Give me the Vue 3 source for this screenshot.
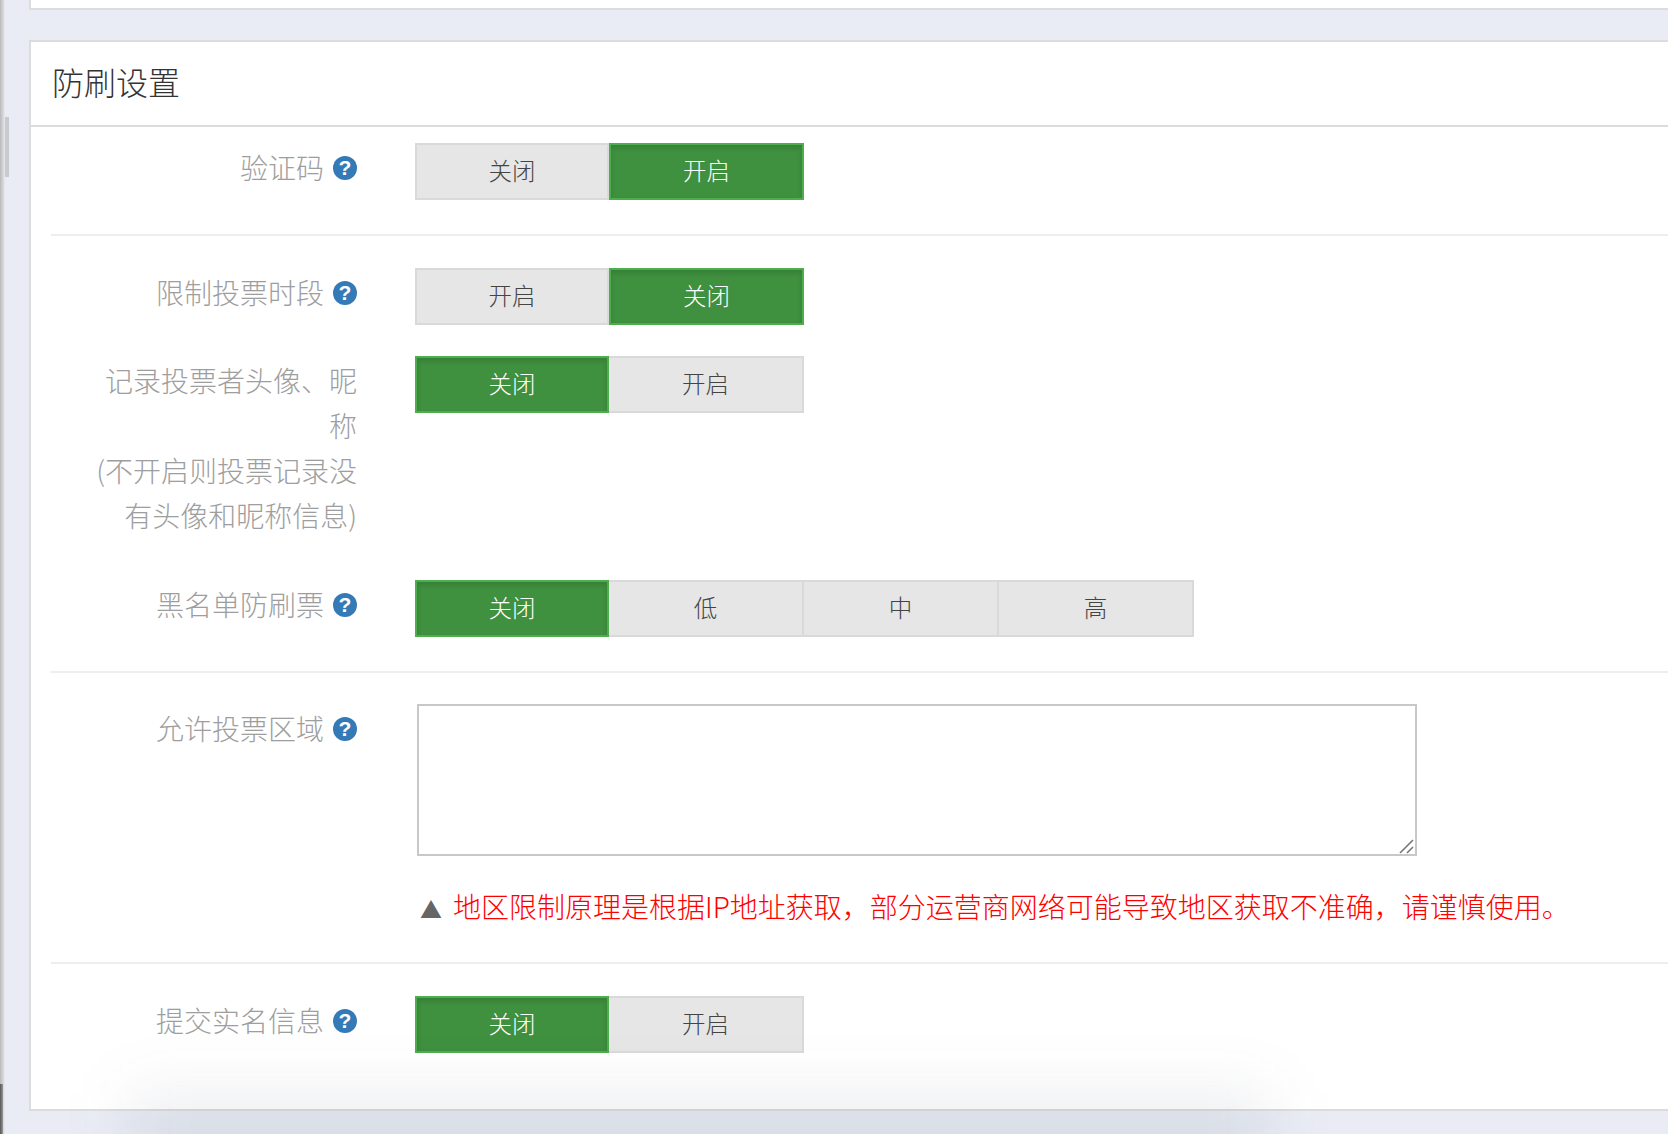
<template>
  <div class="page">
    <div class="edge"><span class="thumb"></span><span class="edge-low"></span></div>
    <div class="prev-card"></div>
    <section class="card">
      <h3 class="card-title">防刷设置</h3>
      <div class="card-body">
        <div class="group first">
          <div class="row">
            <label class="label">验证码<i class="help">?</i></label>
            <div class="toggles">
              <span class="tg">关闭</span><span class="tg on">开启</span>
            </div>
          </div>
        </div>
        <div class="group">
          <div class="row">
            <label class="label">限制投票时段<i class="help">?</i></label>
            <div class="toggles">
              <span class="tg">开启</span><span class="tg on">关闭</span>
            </div>
          </div>
          <div class="row tall">
            <label class="label">记录投票者头像、昵称<br>(不开启则投票记录没有头像和昵称信息)</label>
            <div class="toggles">
              <span class="tg on">关闭</span><span class="tg">开启</span>
            </div>
          </div>
          <div class="row">
            <label class="label">黑名单防刷票<i class="help">?</i></label>
            <div class="toggles">
              <span class="tg on">关闭</span><span class="tg">低</span><span class="tg">中</span><span class="tg">高</span>
            </div>
          </div>
        </div>
        <div class="group area-group">
          <div class="row area-row">
            <label class="label">允许投票区域<i class="help">?</i></label>
            <div class="area-wrap">
              <div class="area-box">
                <textarea class="area"></textarea>
                <svg class="grip" width="16" height="16" viewBox="0 0 16 16">
                  <path d="M1 15 L14 2 M8 15 L14 9" stroke="#777" stroke-width="1.6" fill="none" />
                </svg>
              </div>
              <p class="note"><span class="tri">▲</span>地区限制原理是根据IP地址获取，部分运营商网络可能导致地区获取不准确，请谨慎使用。</p>
            </div>
          </div>
        </div>
        <div class="group last">
          <div class="row">
            <label class="label">提交实名信息<i class="help">?</i></label>
            <div class="toggles">
              <span class="tg on">关闭</span><span class="tg">开启</span>
            </div>
          </div>
        </div>
      </div>
    </section>
    <div class="shadow"></div>
  </div>
</template>

<script setup>
</script>

<style>
html, body {
  margin: 0;
  overflow: hidden;
}
</style>

<style scoped>
.page {
  position: relative;
  width: 1668px;
  height: 1134px;
  overflow: hidden;
  background: #e9ecf4;
  padding-left: 29px;
  box-sizing: border-box;
  font-family: "Noto Sans CJK SC", "Liberation Sans", sans-serif;
  font-weight: 300;
}
.edge {
  position: absolute;
  left: 0;
  top: 0;
  width: 5px;
  height: 100%;
  background: linear-gradient(90deg, #b9b9bb, #d8dadf 70%, #e9ecf4);
}
.thumb {
  position: absolute;
  left: 5px;
  top: 117px;
  width: 4px;
  height: 60px;
  background: #c8cacd;
}
.edge-low {
  position: absolute;
  left: 0;
  top: 1084px;
  width: 3px;
  height: 50px;
  background: linear-gradient(90deg, #555, #999);
}
.prev-card {
  height: 8px;
  background: #fff;
  border-left: 2px solid #dcdcdc;
  border-bottom: 2px solid #dcdcdc;
}
.card {
  margin-top: 30px;
  background: #fff;
  border: 2px solid #dcdcdc;
  border-right: 0;
  width: 1700px;
  box-sizing: border-box;
  height: 1071px;
}
.card-title {
  margin: 0;
  height: 83px;
  line-height: 78px;
  padding-left: 21px;
  font-size: 32px;
  font-weight: 300;
  color: #333;
  border-bottom: 2px solid #dcdcdc;
}
.card-body {
  padding-left: 20px;
}
.group {
  padding-top: 32px;
  border-bottom: 2px solid #eee;
}
.group.first {
  padding-top: 16px;
}
.group.area-group {
  padding-top: 31px;
}
.group.last {
  border-bottom: 0;
}
.row {
  display: flex;
  align-items: flex-start;
  padding-bottom: 34px;
}
.group .row + .row {
  margin-top: -3px;
}
.row.tall {
  padding-bottom: 45px;
}
.row.area-row {
  padding-bottom: 31px;
}
.label {
  width: 270px;
  margin-left: 36px;
  padding-top: 2px;
  flex: none;
  text-align: right;
  font-size: 28px;
  line-height: 45px;
  color: #9e9e9e;
}
.help {
  display: inline-block;
  width: 24px;
  height: 24px;
  margin-left: 9px;
  border-radius: 50%;
  background: #337ab7;
  color: #fff;
  font-family: "Liberation Sans", sans-serif;
  font-style: normal;
  font-weight: 700;
  font-size: 21px;
  line-height: 24px;
  text-align: center;
  vertical-align: 4px;
}
.toggles {
  display: flex;
  margin-left: 58px;
}
.tg {
  width: 194px;
  height: 57px;
  box-sizing: border-box;
  border: 2px solid #d9d9d9;
  background: #e6e6e6;
  color: #444;
  font-size: 23.5px;
  line-height: 50px;
  text-align: center;
}
.tg + .tg {
  width: 195px;
  border-left: 0;
}
.tg.on {
  background: #3f903f;
  border: 2px solid #4cae4c;
  color: #fff;
  box-shadow: inset 0 3px 5px rgba(0, 0, 0, .125);
}
.area-wrap {
  margin-left: 60px;
}
.area-box {
  position: relative;
  width: 1000px;
}
.area {
  display: block;
  width: 100%;
  height: 152px;
  box-sizing: border-box;
  border: 2px solid #c8c8c8;
  background: #fff;
  margin: 0;
  padding: 0;
  resize: none;
}
.grip {
  position: absolute;
  right: 2px;
  bottom: 2px;
}
.note {
  margin: 28px 0 0 3px;
  font-size: 28px;
  line-height: 45px;
  color: #f00;
  white-space: nowrap;
}
.tri {
  color: #666;
  font-size: 22px;
  margin-right: 11px;
}
.shadow {
  position: absolute;
  left: 130px;
  right: 400px;
  bottom: -50px;
  height: 90px;
  background: rgba(60, 70, 100, .09);
  filter: blur(32px);
  pointer-events: none;
}
</style>
